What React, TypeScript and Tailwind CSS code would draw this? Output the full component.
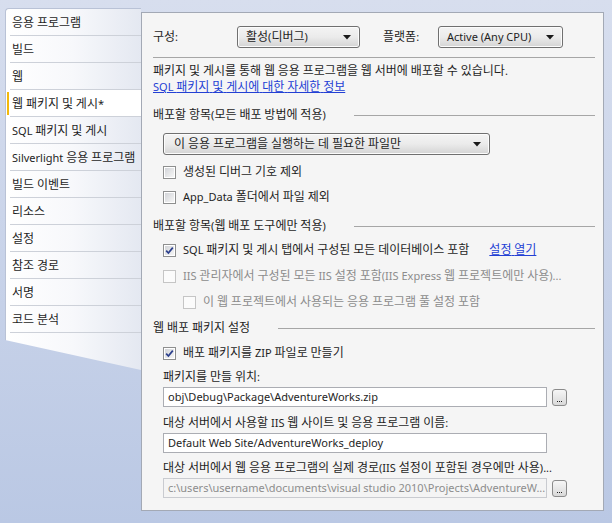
import React from "react";

const tabs = [
  "응용 프로그램",
  "빌드",
  "웹",
  "웹 패키지 및 게시*",
  "SQL 패키지 및 게시",
  "Silverlight 응용 프로그램",
  "빌드 이벤트",
  "리소스",
  "설정",
  "참조 경로",
  "서명",
  "코드 분석",
];

function K({ t }: { t: string }) {
  const parts = t.split(/([\uAC00-\uD7A3\u3131-\u318E]+)/);
  return (
    <>
      {parts.map((p, i) =>
        i % 2 === 1 ? (
          <span key={i} className="text-[12px]">
            {p}
          </span>
        ) : (
          <React.Fragment key={i}>{p}</React.Fragment>
        )
      )}
    </>
  );
}

function Arrow() {
  return (
    <svg width="8" height="5" viewBox="0 0 8 5" className="shrink-0">
      <path d="M0 0 L8 0 L4 4.5 Z" fill="#1a1a1a" />
    </svg>
  );
}

function Combo({ text, w, pl }: { text: string; w: string; pl: string }) {
  return (
    <div
      className={`${w} ${pl} h-[22px] flex items-center justify-between pr-[8px] border border-[#707070] rounded-[3px] bg-gradient-to-b from-[#f4f4f4] via-[#ebebeb] to-[#d4d4d4] shadow-[inset_0_0_0_1px_#fcfcfc] text-[#1e1e1e]`}
    >
      <span className="whitespace-nowrap">
        <K t={text} />
      </span>
      <Arrow />
    </div>
  );
}

function Check({ checked, disabled }: { checked?: boolean; disabled?: boolean }) {
  return (
    <span
      className={`w-[13px] h-[13px] shrink-0 border flex items-center justify-center ${
        disabled ? "border-[#c5c5c5] bg-[#fbfbfb]" : "border-[#8e8f8f] bg-white"
      }`}
    >
      {!disabled && (
        <span className="w-[9px] h-[9px] bg-gradient-to-br from-[#d2d4d8] to-[#f6f6f6] flex items-center justify-center">
          {checked && (
            <svg width="9" height="9" viewBox="0 0 9 9">
              <path d="M1.2 4.6 L3.4 7 L7.8 1.6" fill="none" stroke="#2b3f8c" strokeWidth="1.7" />
            </svg>
          )}
        </span>
      )}
    </span>
  );
}

function CheckRow({
  label,
  checked,
  disabled,
  indent,
  mt,
  children,
}: {
  label: string;
  checked?: boolean;
  disabled?: boolean;
  indent?: boolean;
  mt: string;
  children?: React.ReactNode;
}) {
  return (
    <div className={`${mt} h-[20px] flex items-center ${indent ? "pl-[30px]" : "pl-[10px]"}`}>
      <Check checked={checked} disabled={disabled} />
      <span className={`ml-[7px] whitespace-nowrap ${disabled ? "text-[#8c8c8c]" : "text-[#1e1e1e]"}`}>
        <K t={label} />
      </span>
      {children}
    </div>
  );
}

function Section({ label, mt }: { label: string; mt: string }) {
  return (
    <div className={`${mt} h-[16px] flex items-center`}>
      <span className="text-[#1e1e1e] whitespace-nowrap">
        <K t={label} />
      </span>
      <span className="flex-1 ml-[28px] border-t border-[#a6a6a6]" />
    </div>
  );
}

function Dots() {
  return (
    <div className="ml-[5px] w-[15px] h-[17px] border border-[#8b8b8b] rounded-[3px] bg-gradient-to-b from-[#f6f6f6] to-[#d9d9d9] flex items-end justify-center pb-[3px]">
      <span className="flex gap-[1px]">
        <span className="w-[1px] h-[1px] bg-[#222]" />
        <span className="w-[1px] h-[1px] bg-[#222]" />
        <span className="w-[1px] h-[1px] bg-[#222]" />
      </span>
    </div>
  );
}

function Input({ text, disabled, button, mt }: { text: string; disabled?: boolean; button?: boolean; mt: string }) {
  return (
    <div className={`${mt} pl-[10px] flex items-center`}>
      <div
        className={`w-[384px] h-[20px] border flex items-center pl-[4px] overflow-hidden whitespace-nowrap ${
          disabled ? "border-[#c9cbd0] bg-[#f4f4f4] text-[#8d8d8d]" : "border-[#abadb3] bg-white text-[#1e1e1e]"
        }`}
      >
        {text}
      </div>
      {button && <Dots />}
    </div>
  );
}

function Label({ t, mt }: { t: string; mt: string }) {
  return (
    <div className={`${mt} pl-[10px] text-[#1e1e1e] whitespace-nowrap h-[16px]`}>
      <K t={t} />
    </div>
  );
}

export default function App() {
  return (
    <div
      className="w-[612px] h-[523px] bg-gradient-to-b from-[#d7deee] to-[#bac8e4] relative flex text-[11px] leading-[16px]"
      style={{ fontFamily: '"Noto Sans", "Noto Sans CJK KR", sans-serif' }}
    >
      {/* Tabs */}
      <div className="ml-[5px] mt-[8px] w-[136px] h-[362px] relative z-10">
        <div
          className="w-full h-full bg-gradient-to-r from-white via-[#f7f8fb] to-[#e4e8f1] rounded-tl-[4px] border-l border-t border-[#b9c2d6]"
          style={{ clipPath: "polygon(0 0, 100% 0, 100% 100%, 0 calc(100% - 30px))" }}
        >
          <div className="flex flex-col">
            {tabs.map((t, i) => (
              <div key={t} className={`h-[27px] flex items-center relative ${i === 3 ? "bg-white" : ""}`}>
                {i === 3 && <span className="absolute left-[1px] top-[2px] bottom-[2px] w-[2px] bg-[#f2b90c]" />}
                <span className="pl-[6px] text-[#1e1e1e] whitespace-nowrap">
                  <K t={t} />
                </span>
                <span className="absolute left-[4px] right-0 bottom-0 border-b border-[#cdd1d9]" />
              </div>
            ))}
          </div>
        </div>
      </div>

      {/* Main panel */}
      <div className="mt-[12px] w-[463px] h-[499px] border border-[#a3a9b5] bg-[#f5f5f5] pl-[11px] pr-[8px] flex flex-col">
        <div className="mt-[13px] h-[22px] flex items-center">
          <span className="w-[84px] text-[#1e1e1e]">
            <K t="구성:" />
          </span>
          <Combo text="활성(디버그)" w="w-[123px]" pl="pl-[8px]" />
          <span className="ml-[23px] w-[55px] text-[#1e1e1e]">
            <K t="플랫폼:" />
          </span>
          <Combo text="Active (Any CPU)" w="w-[125px]" pl="pl-[8px]" />
        </div>
        <div className="mt-[9px] border-t border-[#a6a6a6]" />
        <div className="mt-[5px] h-[16px] text-[#1e1e1e] whitespace-nowrap">
          <K t="패키지 및 게시를 통해 웹 응용 프로그램을 웹 서버에 배포할 수 있습니다." />
        </div>
        <div className="h-[16px] whitespace-nowrap">
          <span className="text-[#2340d4] underline">
            <K t="SQL 패키지 및 게시에 대한 자세한 정보" />
          </span>
        </div>

        <Section label="배포할 항목(모든 배포 방법에 적용)" mt="mt-[12px]" />
        <div className="mt-[10px] pl-[10px]">
          <Combo text="이 응용 프로그램을 실행하는 데 필요한 파일만" w="w-[327px]" pl="pl-[10px]" />
        </div>
        <CheckRow label="생성된 디버그 기호 제외" mt="mt-[7px]" />
        <CheckRow label="App_Data 폴더에서 파일 제외" mt="mt-[5px]" />

        <Section label="배포할 항목(웹 배포 도구에만 적용)" mt="mt-[11px]" />
        <CheckRow label="SQL 패키지 및 게시 탭에서 구성된 모든 데이터베이스 포함" checked mt="mt-[6px]">
          <span className="ml-[20px] text-[#2340d4] underline whitespace-nowrap">
            <K t="설정 열기" />
          </span>
        </CheckRow>
        <CheckRow
          label="IIS 관리자에서 구성된 모든 IIS 설정 포함(IIS Express 웹 프로젝트에만 사용)..."
          disabled
          mt="mt-[6px]"
        />
        <CheckRow label="이 웹 프로젝트에서 사용되는 응용 프로그램 풀 설정 포함" disabled indent mt="mt-[6px]" />

        <Section label="웹 배포 패키지 설정" mt="mt-[8px]" />
        <CheckRow label="배포 패키지를 ZIP 파일로 만들기" checked mt="mt-[7px]" />
        <Label t="패키지를 만들 위치:" mt="mt-[6px]" />
        <Input text="obj\Debug\Package\AdventureWorks.zip" button mt="mt-[2px]" />
        <Label t="대상 서버에서 사용할 IIS 웹 사이트 및 응용 프로그램 이름:" mt="mt-[8px]" />
        <Input text="Default Web Site/AdventureWorks_deploy" mt="mt-[2px]" />
        <Label t="대상 서버에서 웹 응용 프로그램의 실제 경로(IIS 설정이 포함된 경우에만 사용)..." mt="mt-[7px]" />
        <Input
          text="c:\users\username\documents\visual studio 2010\Projects\AdventureW..."
          disabled
          button
          mt="mt-[2px]"
        />
      </div>
    </div>
  );
}
